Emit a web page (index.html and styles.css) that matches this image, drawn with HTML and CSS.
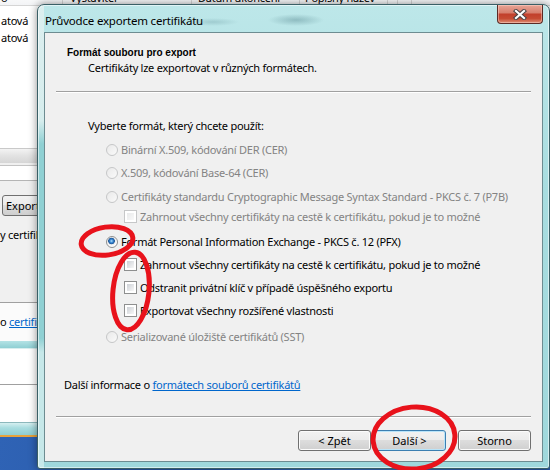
FILE: index.html
```html
<!DOCTYPE html>
<html lang="cs">
<head>
    <meta charset="UTF-8">
    <title>Průvodce exportem certifikátu</title>
    <link rel="stylesheet" href="styles.css">
</head>
<body>
    <div class="desk">
        <div class="backwin">
            <div class="colhead">
                <span class="col c1">o</span>
                <span class="col c2">Vystavitel</span>
                <span class="col c3">Datum ukončení</span>
                <span class="col c4">Popisný název</span>
                <span class="col c5"></span>
                <span class="col c6"></span>
            </div>
            <div class="list">
                <div class="lrow">atová</div>
                <div class="lrow">atová</div>
            </div>
            <div class="hscroll"></div>
            <div class="field"></div>
            <div class="panel">
                <button class="bbtn">Export</button>
                <div class="ptext">y certifikátu</div>
            </div>
            <div class="panel2">o <a href="#">certifikátech</a></div>
            <div class="frame1"></div>
            <div class="white1"></div>
            <div class="white2"></div>
            <div class="frame2"></div>
            <div class="taskline"></div>
            <div class="desktop"></div>
        </div>

        <div class="dialog">
            <div class="titlebar">
                <span class="title">Průvodce exportem certifikátu</span>
                <button class="close">
                    <svg width="14" height="11" viewBox="0 0 14 11">
                        <path d="M3 2 L11 9 M11 2 L3 9" stroke="#4b4446" stroke-width="4.2" stroke-linecap="square" fill="none"/>
                        <path d="M3 2 L11 9 M11 2 L3 9" stroke="#fff" stroke-width="2.2" stroke-linecap="square" fill="none"/>
                    </svg>
                </button>
            </div>
            <div class="client">
                <div class="head">
                    <div class="head-title">Formát souboru pro export</div>
                    <div class="head-sub">Certifikáty lze exportovat v různých formátech.</div>
                </div>
                <div class="sep sep-top"></div>
                <div class="prompt">Vyberte formát, který chcete použít:</div>
                <div class="opts">
                    <div class="opt off"><span class="radio"></span>Binární X.509, kódování DER (CER)</div>
                    <div class="opt off"><span class="radio"></span>X.509, kódování Base-64 (CER)</div>
                    <div class="opt off p7b"><span class="radio"></span>Certifikáty standardu Cryptographic Message Syntax Standard - PKCS č. 7 (P7B)</div>
                    <div class="opt off sub sub-p7b"><span class="check"></span>Zahrnout všechny certifikáty na cestě k certifikátu, pokud je to možné</div>
                    <div class="opt pfx"><span class="radio checked"></span>Formát Personal Information Exchange - PKCS č. 12 (PFX)</div>
                    <div class="opt sub"><span class="check"></span>Zahrnout všechny certifikáty na cestě k certifikátu, pokud je to možné</div>
                    <div class="opt sub"><span class="check"></span>Odstranit privátní klíč v případě úspěšného exportu</div>
                    <div class="opt sub"><span class="check"></span>Exportovat všechny rozšířené vlastnosti</div>
                    <div class="opt off sst"><span class="radio"></span>Serializované úložiště certifikátů (SST)</div>
                </div>
                <div class="info">Další informace o <a href="#">formátech souborů certifikátů</a></div>
                <div class="sep sep-bottom"></div>
                <div class="footer">
                    <button class="btn">&lt; Zpět</button>
                    <button class="btn default">Další &gt;</button>
                    <button class="btn cancel">Storno</button>
                </div>
            </div>
        </div>

        <svg class="marks" width="550" height="470" viewBox="0 0 550 470">
            <g fill="none" stroke="#e8121b" stroke-width="5">
                <ellipse cx="107" cy="241" rx="26" ry="14" transform="rotate(-8 107 241)"/>
                <ellipse cx="131" cy="291" rx="18" ry="39" transform="rotate(6 131 291)"/>
                <ellipse cx="414" cy="438" rx="41" ry="31" transform="rotate(-5 414 438)"/>
            </g>
        </svg>
    </div>
</body>
</html>
```

FILE: styles.css
```css
body {
    margin: 0;
    overflow: hidden;
    font-family: 'Noto Sans', 'DejaVu Sans', sans-serif;
    font-size: 11px;
    letter-spacing: -0.25px;
    color: #000;
}

.desk {
    position: relative;
    width: 550px;
    height: 470px;
    overflow: hidden;
    background: #f0f0f0;
}

/* window behind the wizard */
.backwin {
    display: flex;
    flex-direction: column;
    width: 550px;
    height: 470px;
}

.colhead {
    display: flex;
    height: 14px;
    margin-top: -9px;
    line-height: 14px;
    background: linear-gradient(#fff, #f3f4f6);
    border-bottom: 1px solid #d5d5d5;
    white-space: nowrap;
}

.col {
    box-sizing: border-box;
    padding-left: 6px;
    border-right: 1px solid #d5d5d5;
    overflow: hidden;
}

.c1 { width: 63px; padding-left: 1px; }
.c2 { width: 129px; padding-left: 7px; }
.c3 { width: 108px; }
.c4 { width: 88px; padding-left: 5px; }
.c5 { width: 10px; }
.c6 { width: 14px; }

.list {
    height: 142px;
    padding-top: 6px;
    box-sizing: border-box;
    background: #fff;
}

.lrow {
    height: 17px;
    line-height: 17px;
    padding-left: 1px;
}

.hscroll {
    height: 14px;
    border-top: 1px solid #c9c9c9;
    background: linear-gradient(#f3f3f3, #e2e2e2 50%, #d6d6d6);
}

.field {
    height: 14px;
    margin-top: 2px;
    background: #fff;
    border-top: 1px solid #c3c3c3;
    border-bottom: 1px solid #b5b5b5;
}

.panel {
    height: 121px;
    padding-top: 14px;
    box-sizing: border-box;
    background: #f0f0f0;
}

.bbtn {
    display: block;
    height: 21px;
    width: 80px;
    margin-left: 2px;
    padding: 0 0 0 3px;
    text-align: left;
    font: inherit;
    border: 1px solid #707070;
    border-radius: 3px;
    background: linear-gradient(#f2f2f2, #ebebeb 49%, #dddddd 50%, #cfcfcf);
}

.ptext {
    margin-top: 11px;
    line-height: 15px;
    white-space: nowrap;
}

.panel2 {
    height: 38px;
    line-height: 38px;
    border-top: 1px solid #a0a0a0;
    background: #fbfbfb;
    white-space: nowrap;
}

.panel2 a {
    color: #0066cc;
}

.frame1 {
    height: 7px;
    background: linear-gradient(#b4e3e5, #8fcfd3);
    border-bottom: 1px solid #d8eeee;
}

.white1 {
    height: 35px;
    background: #fff;
    border-bottom: 1px solid #a0a0a0;
}

.white2 {
    height: 37px;
    background: #fff;
}

.frame2 {
    height: 12px;
    background: linear-gradient(#d6eff0, #a9dde0 40%, #8ecdd1);
    border-top: 1px solid #8cb8bc;
}

.taskline {
    height: 2px;
    background: #e8a23a;
}

.desktop {
    flex: 1;
    background: linear-gradient(100deg, #2f63b5, #2857a6 40%, #3a70c0 62%, #2b5aa9);
}

/* wizard window */
.dialog {
    position: absolute;
    left: 37px;
    top: 4px;
    width: 513px;
    height: 465px;
    box-sizing: border-box;
    display: flex;
    flex-direction: column;
    padding: 0 6px 6px;
    border: 1px solid #3a5f66;
    border-radius: 7px 7px 3px 3px;
    background:
        radial-gradient(28px 6px at 258px 15px, rgba(60, 110, 120, 0.35), transparent),
        radial-gradient(26px 4px at 175px 17px, rgba(60, 110, 120, 0.22), transparent),
        linear-gradient(#dcefef, #d6eded 25%, #8fd0d3 30%, #8fd0d3 72%, #c6e8e9 75%) 0 0 / 6px 100% no-repeat,
        linear-gradient(#bde7e9, #a8dde0 40%, #9fd8dc);
    box-shadow: 0 0 8px rgba(0, 0, 0, 0.45), inset 0 0 0 1px rgba(255, 255, 255, 0.55);
}

.titlebar {
    display: flex;
    align-items: flex-start;
    height: 27px;
}

.title {
    margin: 8px 0 0 1px;
    line-height: 16px;
    font-size: 11.5px;
    letter-spacing: -0.2px;
}

.close {
    display: flex;
    align-items: center;
    justify-content: center;
    margin-left: auto;
    width: 46px;
    height: 19px;
    padding: 0;
    border: 1px solid #5b2a25;
    border-top: none;
    border-radius: 0 0 4px 4px;
    background: linear-gradient(#e8a596, #d7806f 42%, #c2402c 52%, #c64b33 75%, #de8e74);
    box-shadow: inset 0 0 0 1px rgba(255, 220, 210, 0.45);
}

.client {
    flex: 1;
    box-sizing: border-box;
    border: 1px solid #6d8c91;
    background: #f0f0f0;
}

.head {
    padding: 12px 0 0 22px;
    line-height: 15px;
}

.head-title {
    font-family: 'Liberation Sans', Arial, sans-serif;
    font-size: 10px;
    font-weight: bold;
    letter-spacing: 0;
}

.head-sub {
    padding-left: 21px;
}

.sep {
    margin: 0 11px;
    border-top: 1px solid #a0a0a0;
    border-bottom: 1px solid #fff;
}

.sep-top {
    margin-top: 16px;
}

.prompt {
    margin-top: 25px;
    padding-left: 43px;
    line-height: 15px;
}

.opts {
    margin-top: 5px;
}

.opt {
    display: flex;
    align-items: center;
    height: 23px;
    padding-left: 61px;
    white-space: nowrap;
}

.opt.sub { padding-left: 79px; }
.opt.p7b { margin-top: 1px; }
.opt.sub-p7b { margin-top: -3px; }
.opt.pfx { margin-top: 2px; }
.opt.sst { margin-top: 3px; }

.opt.off {
    color: #838383;
}

.radio {
    flex: none;
    box-sizing: border-box;
    width: 12px;
    height: 12px;
    margin-right: 3px;
    border: 1px solid #8e8f8f;
    border-radius: 50%;
    background: linear-gradient(135deg, #d9dbde, #fbfbfb);
}

.off .radio {
    border-color: #c6c7c8;
    background: linear-gradient(135deg, #e9e9e9, #fafafa);
}

.radio.checked {
    background: radial-gradient(circle at 45% 40%, #b6e2fb 0, #3a8ad4 1.6px, #1c5597 3px, #e7e9ec 3.6px, #fcfcfc 5px);
}

.check {
    flex: none;
    box-sizing: border-box;
    width: 13px;
    height: 13px;
    margin-right: 3px;
    padding: 2px;
    border: 1px solid #8e8f8f;
    background: linear-gradient(135deg, #cdd1d6, #f7f7f7) content-box, #fff;
}

.off .check {
    border-color: #c6c7c8;
    background: linear-gradient(135deg, #e8e9ea, #f9f9f9) content-box, #fff;
}

.info {
    margin-top: 29px;
    padding-left: 19px;
    line-height: 15px;
}

.info a {
    color: #0066cc;
}

.sep-bottom {
    margin-top: 24px;
}

.footer {
    display: flex;
    justify-content: flex-end;
    gap: 2px;
    margin-top: 12px;
    padding-right: 11px;
}

.btn {
    width: 73px;
    height: 21px;
    padding: 0;
    font: inherit;
    color: #000;
    border: 1px solid #707070;
    border-radius: 3px;
    background: linear-gradient(#f2f2f2, #ebebeb 49%, #dddddd 50%, #cfcfcf);
    box-shadow: inset 0 0 0 1px #fbfbfb;
}

.btn.default {
    border-color: #3c7fb1;
    box-shadow: inset 0 0 0 1px #b9e4f9;
}

.btn.cancel {
    margin-left: 10px;
}

.marks {
    position: absolute;
    left: 0;
    top: 0;
    pointer-events: none;
}
```
